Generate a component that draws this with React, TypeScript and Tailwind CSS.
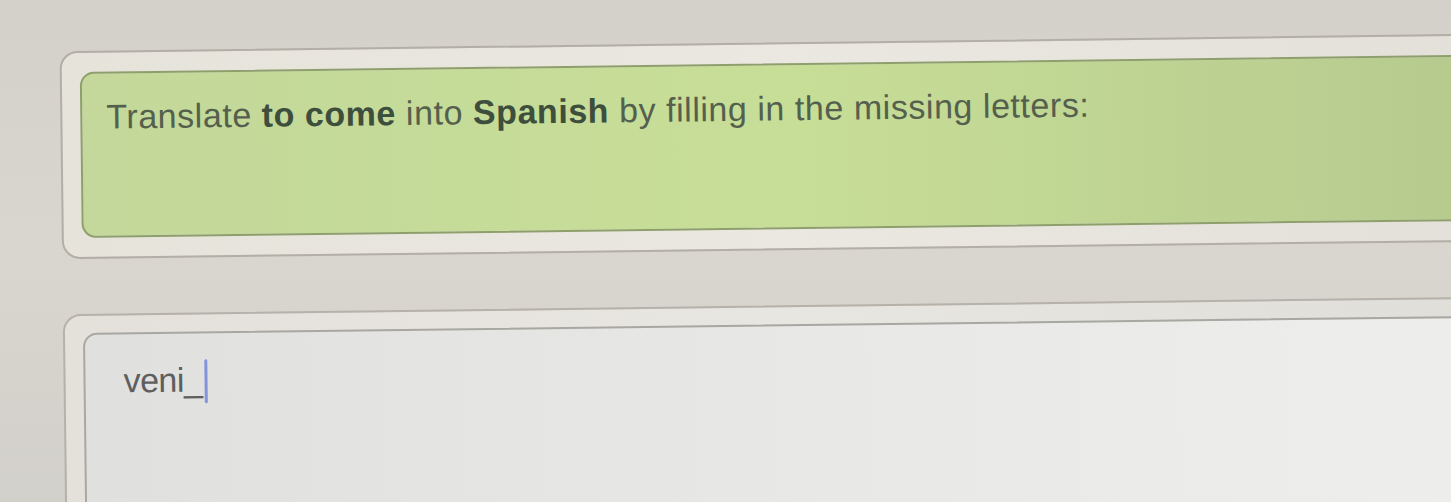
import React from "react";

export default function App() {
  return (
    <div
      className="w-[1451px] h-[502px] overflow-hidden bg-gradient-to-b from-[#d4d1ca] via-[#d9d6cf] to-[#d2d0ca]"
      style={{ fontFamily: '"Liberation Sans", Arial, sans-serif' }}
    >
      <div className="w-full h-full -rotate-[0.7deg] pl-[62px] pt-[43px]">
        <div className="w-[1450px] h-[208px] rounded-[18px] border-2 border-[#b3afa7] bg-gradient-to-r from-[#e6e3db] via-[#ebe8e1] to-[#e2e0d8] pt-[19px] pl-[18px] pb-[19px]">
          <div className="h-full rounded-[14px] border-2 border-[#8e9f6c] bg-gradient-to-r from-[#c3d89a] via-[#c7de97] to-[#b5c98e] pl-[24px] pt-[24px]">
            <p className="text-[34px] leading-[38px] text-[#54604d] tracking-[0.55px]">
              Translate <span className="font-bold text-[#3e4e3d]">to come</span> into{" "}
              <span className="font-bold text-[#3e4e3d]">Spanish</span> by filling in the missing letters:
            </p>
          </div>
        </div>
        <div className="mt-[55px] w-[1450px] h-[240px] rounded-[18px] border-2 border-[#b6b2aa] bg-gradient-to-r from-[#e4e1db] via-[#e8e6e1] to-[#e0ded9] pt-[17px] pl-[18px]">
          <div className="h-full rounded-[14px] border-2 border-[#a9a7a2] bg-gradient-to-r from-[#e0e0de] via-[#e8e8e6] to-[#eeeeec] pl-[38px] pt-[26px]">
            <div className="flex items-start">
              <span className="text-[34px] leading-[40px] text-[#5e5e5e] tracking-[-0.5px]">veni_</span>
              <span className="ml-[2px] w-[3px] h-[44px] bg-[#8394dc] rounded-full" />
            </div>
          </div>
        </div>
      </div>
    </div>
  );
}
